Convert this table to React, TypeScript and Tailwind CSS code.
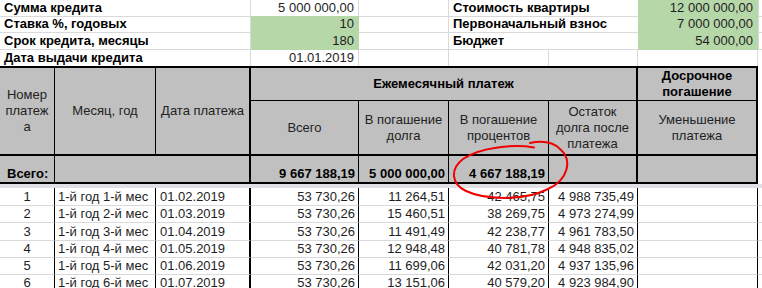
const top = [
  { label: "Сумма кредита", value: "5 000 000,00", green: false, label2: "Стоимость квартиры", value2: "12 000 000,00", h: "h-[16px]" },
  { label: "Ставка %, годовых", value: "10", green: true, label2: "Первоначальный взнос", value2: "7 000 000,00", h: "h-[17px]" },
  { label: "Срок кредита, месяцы", value: "180", green: true, label2: "Бюджет", value2: "54 000,00", h: "h-[17px]" },
];

const rows = [
  ["1", "1-й год 1-й мес", "01.02.2019", "53 730,26", "11 264,51", "42 465,75", "4 988 735,49"],
  ["2", "1-й год 2-й мес", "01.03.2019", "53 730,26", "15 460,51", "38 269,75", "4 973 274,99"],
  ["3", "1-й год 3-й мес", "01.04.2019", "53 730,26", "11 491,49", "42 238,77", "4 961 783,50"],
  ["4", "1-й год 4-й мес", "01.05.2019", "53 730,26", "12 948,48", "40 781,78", "4 948 835,02"],
  ["5", "1-й год 5-й мес", "01.06.2019", "53 730,26", "11 699,06", "42 031,20", "4 937 135,96"],
  ["6", "1-й год 6-й мес", "01.07.2019", "53 730,26", "13 151,06", "40 579,20", "4 923 984,90"],
];

const rowH = ["h-[18px]", "h-[17px]", "h-[18px]", "h-[17px]", "h-[17px]", "h-[17px]"];

const cols9 = "grid grid-cols-[55px_101px_95px_108px_90px_100px_89px_120px_4px]";
const hd = "flex items-center justify-center text-center bg-[#c0c0c0] border-black px-[2px]";
const tot = "flex items-end bg-[#c0c0c0] border-black border-b-2 font-bold text-black";

const App = () => {
  return (
    <div className="relative w-[762px] h-[288px] overflow-hidden bg-white font-['Liberation_Sans',Arial,sans-serif] text-[13px] leading-[16px] text-[#1e1e24]">
      {/* top inputs */}
      {top.map((r) => (
        <div key={r.label} className={`${cols9} ${r.h}`}>
          <div className="col-span-3 flex items-center pl-[4px] font-bold text-black border-b border-r border-[#d9d9d9]">{r.label}</div>
          <div className={`flex items-center justify-end pr-[4px] border-b border-r ${r.green ? "bg-[#b6d7a8] border-[#b6d7a8]" : "border-[#d9d9d9]"}`}>{r.value}</div>
          <div className="border-b border-r border-[#d9d9d9]"></div>
          <div className="col-span-2 flex items-center pl-[4px] font-bold text-black border-b border-[#d9d9d9] whitespace-nowrap">{r.label2}</div>
          <div className="flex items-center justify-end pr-[5px] bg-[#b6d7a8] border-b border-[#b6d7a8]">{r.value2}</div>
          <div className="border-b border-l border-[#d9d9d9]"></div>
        </div>
      ))}
      <div className={`${cols9} h-[16px]`}>
        <div className="col-span-3 flex items-center pl-[4px] font-bold text-black border-r border-[#d9d9d9]">Дата выдачи кредита</div>
        <div className="flex items-center justify-end pr-[4px] border-r border-[#d9d9d9]">01.01.2019</div>
        <div className="border-r border-[#d9d9d9]"></div>
        <div className="border-r border-[#d9d9d9]"></div>
        <div className="border-r border-[#d9d9d9]"></div>
        <div className="border-r border-[#d9d9d9]"></div>
        <div></div>
      </div>

      {/* header */}
      <div className="w-[758px] border-t-2 border-black grid grid-cols-[55px_101px_95px_108px_90px_100px_89px_120px] grid-rows-[33px_55px_28px] text-[#222]">
        <div className={`${hd} row-span-2 border-r border-b-2 !px-[5px] break-all`}>Номер платежа</div>
        <div className={`${hd} row-span-2 border-r border-b-2`}>Месяц, год</div>
        <div className={`${hd} row-span-2 border-r-2 border-b-2`}>Дата платежа</div>
        <div className={`${hd} col-span-4 border-r-2 border-b font-bold text-black`}>Ежемесячный платеж</div>
        <div className={`${hd} border-r-2 border-b font-bold text-black`}>Досрочное погашение</div>
        <div className={`${hd} border-r border-b-2`}>Всего</div>
        <div className={`${hd} border-r border-b-2`}>В погашение долга</div>
        <div className={`${hd} border-r border-b-2`}>В погашение процентов</div>
        <div className={`${hd} border-r-2 border-b-2`}>Остаток долга после платежа</div>
        <div className={`${hd} border-r-2 border-b-2 px-[8px]`}>Уменьшение платежа</div>

        <div className={`${tot} border-r pl-[7px]`}>Всего:</div>
        <div className={`${tot} col-span-2 border-r-2`}></div>
        <div className={`${tot} border-r justify-end pr-[3px]`}>9 667 188,19</div>
        <div className={`${tot} border-r justify-end pr-[3px]`}>5 000 000,00</div>
        <div className={`${tot} border-r justify-end pr-[3px]`}>4 667 188,19</div>
        <div className={`${tot} border-r-2`}></div>
        <div className={`${tot} border-r-2`}></div>
      </div>

      <div className="h-[4px] bg-[#dfe1e5]"></div>

      {/* data */}
      {rows.map((r, i) => (
        <div key={r[0]} className={`${cols9} ${rowH[i]}`}>
          <div className="flex items-center justify-center border-b border-b-[#d9d9d9] border-r border-r-black">{r[0]}</div>
          <div className="flex items-center pl-[3px] whitespace-nowrap border-b border-b-[#d9d9d9] border-r border-r-black">{r[1]}</div>
          <div className="flex items-center pl-[4px] border-b border-b-[#d9d9d9] border-r-2 border-r-black">{r[2]}</div>
          <div className="flex items-center justify-end pr-[3px] border-b border-b-[#d9d9d9] border-r border-r-black">{r[3]}</div>
          <div className="flex items-center justify-end pr-[3px] border-b border-b-[#d9d9d9] border-r border-r-black">{r[4]}</div>
          <div className="flex items-center justify-end pr-[3px] border-b border-b-[#d9d9d9] border-r border-r-black">{r[5]}</div>
          <div className="flex items-center justify-end pr-[3px] border-b border-b-[#d9d9d9] border-r border-r-black">{r[6]}</div>
          <div className="border-b border-b-[#d9d9d9] border-r border-r-black"></div>
          <div className="border-b border-b-[#d9d9d9]"></div>
        </div>
      ))}

      {/* hand-drawn red mark */}
      <svg className="absolute inset-0 pointer-events-none" width="762" height="288" viewBox="0 0 762 288">
        <path
          d="M 534 147.5 C 515 144, 480 147, 463 159 C 450 169, 451 184, 466 191 C 485 200, 525 201, 548 189 C 568 180, 573 160, 560 149 C 552 141, 540 141, 530 143"
          fill="none"
          stroke="#f00000"
          strokeWidth="2"
          strokeLinecap="round"
        />
      </svg>
    </div>
  );
};

export default App;
